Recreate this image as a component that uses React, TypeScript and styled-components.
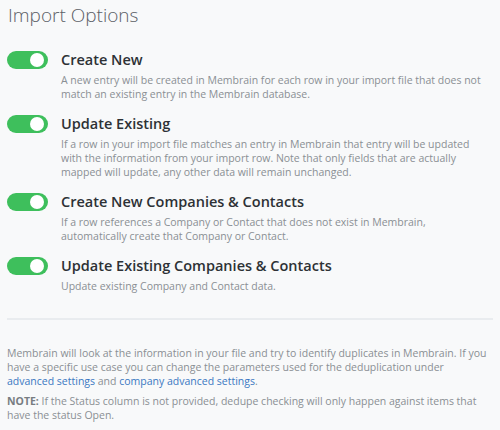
import * as React from "react";
import styled, { createGlobalStyle } from "styled-components";

const GlobalStyle = createGlobalStyle`
  html, body {
    margin: 0;
    padding: 0;
    background: #f8f9fa;
  }
  body {
    font-family: "Open Sans", "Liberation Sans", sans-serif;
  }
`;

const Page = styled.div`
  padding: 0 7px;
  width: 500px;
  height: 430px;
  box-sizing: border-box;
  overflow: hidden;
  background: #f8f9fa;
`;

const Heading = styled.h1`
  margin: 0;
  padding: 1px 0 0 1px;
  font-size: 19px;
  font-weight: 300;
  line-height: 28px;
  color: #5b6066;
`;

const OptionList = styled.div`
  display: flex;
  flex-direction: column;
  gap: 13px;
  margin-top: 21px;
`;

const Option = styled.div`
  display: grid;
  grid-template-columns: 41px 1fr;
  column-gap: 13px;
`;

const Track = styled.span<{ on: boolean }>`
  position: relative;
  display: block;
  width: 41px;
  height: 18px;
  margin-top: 1px;
  border-radius: 9px;
  background: ${(p) => (p.on ? "#3ebf5c" : "#ccd1d6")};
`;

const Knob = styled.span<{ on: boolean }>`
  position: absolute;
  top: 2px;
  left: ${(p) => (p.on ? "23px" : "2px")};
  width: 14px;
  height: 14px;
  border-radius: 50%;
  background: #fff;
`;

const OptionTitle = styled.div`
  font-size: 14.5px;
  font-weight: 600;
  line-height: 20px;
  color: #2d3135;
`;

const OptionText = styled.div`
  max-width: 425px;
  margin-top: 3px;
  font-size: 10.5px;
  line-height: 14px;
  color: #8a8f94;
`;

const Divider = styled.hr`
  margin: 25px 0 0;
  border: none;
  border-top: 2px solid #e9ecef;
`;

const Footer = styled.div`
  margin-top: 26px;
  display: flex;
  flex-direction: column;
  gap: 6px;
`;

const Para = styled.p`
  margin: 0;
  font-size: 10.5px;
  line-height: 14px;
  color: #8a8f94;
`;

const Anchor = styled.a`
  color: #3a78c2;
  text-decoration: none;
`;

const Strong = styled.b`
  font-weight: 700;
  color: #777c81;
`;

interface ToggleOptionProps {
  title: string;
  text: string;
  on?: boolean;
}

const ToggleOption: React.FC<ToggleOptionProps> = ({ title, text, on = true }) => (
  <Option>
    <Track on={on}>
      <Knob on={on} />
    </Track>
    <div>
      <OptionTitle>{title}</OptionTitle>
      <OptionText>{text}</OptionText>
    </div>
  </Option>
);

export default function App() {
  return (
    <>
      <GlobalStyle />
      <Page>
        <Heading>Import Options</Heading>
        <OptionList>
          <ToggleOption
            title="Create New"
            text="A new entry will be created in Membrain for each row in your import file that does not match an existing entry in the Membrain database."
          />
          <ToggleOption
            title="Update Existing"
            text="If a row in your import file matches an entry in Membrain that entry will be updated with the information from your import row. Note that only fields that are actually mapped will update, any other data will remain unchanged."
          />
          <ToggleOption
            title="Create New Companies & Contacts"
            text="If a row references a Company or Contact that does not exist in Membrain, automatically create that Company or Contact."
          />
          <ToggleOption
            title="Update Existing Companies & Contacts"
            text="Update existing Company and Contact data."
          />
        </OptionList>
        <Divider />
        <Footer>
          <Para>
            Membrain will look at the information in your file and try to identify duplicates in
            Membrain. If you have a specific use case you can change the parameters used for the
            deduplication under <Anchor href="#">advanced settings</Anchor> and{" "}
            <Anchor href="#">company advanced settings</Anchor>.
          </Para>
          <Para>
            <Strong>NOTE:</Strong> If the Status column is not provided, dedupe checking will only
            happen against items that have the status Open.
          </Para>
        </Footer>
      </Page>
    </>
  );
}
